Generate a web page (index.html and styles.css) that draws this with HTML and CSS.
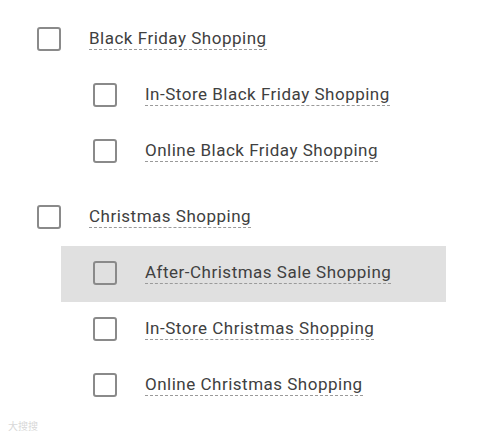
FILE: index.html
```html
<!DOCTYPE html>
<html>
<head>
<meta charset="utf-8">
<link rel="stylesheet" href="styles.css">
</head>
<body>
<div class="tree">
  <div class="group">
    <div class="row parent"><span class="box"></span><span class="label">Black Friday Shopping</span></div>
    <div class="children">
      <div class="row"><span class="box"></span><span class="label">In-Store Black Friday Shopping</span></div>
      <div class="row"><span class="box"></span><span class="label">Online Black Friday Shopping</span></div>
    </div>
  </div>
  <div class="group">
    <div class="row parent"><span class="box"></span><span class="label">Christmas Shopping</span></div>
    <div class="children">
      <div class="row active"><span class="box"></span><span class="label">After-Christmas Sale Shopping</span></div>
      <div class="row"><span class="box"></span><span class="label">In-Store Christmas Shopping</span></div>
      <div class="row"><span class="box"></span><span class="label">Online Christmas Shopping</span></div>
    </div>
  </div>
</div>
<div class="watermark">大搜搜</div>
</body>
</html>
```
FILE: styles.css
```css
html, body {
  margin: 0;
  padding: 0;
  background: #ffffff;
}
body {
  font-family: Roboto, "Noto Sans", sans-serif;
  color: #404040;
  width: 477px;
  height: 436px;
  position: relative;
  overflow: hidden;
}
.tree {
  padding-top: 12px;
  padding-left: 5px;
  width: 441px;
  display: flex;
  flex-direction: column;
  gap: 10px;
}
.group {
  display: flex;
  flex-direction: column;
}
.children {
  padding-left: 56px;
  display: flex;
  flex-direction: column;
}
.row {
  height: 56px;
  display: flex;
  align-items: center;
  padding-left: 32px;
  padding-bottom: 3px;
  box-sizing: border-box;
}
.row.active {
  background: #e0e0e0;
}
.box {
  width: 20px;
  height: 20px;
  border: 2px solid #8a8a8a;
  border-radius: 3px;
  flex: none;
}
.label {
  margin-left: 28px;
  font-size: 17px;
  letter-spacing: 0.5px;
  line-height: 20px;
  border-bottom: 1px dashed #9a9a9a;
  padding-bottom: 1px;
}
.watermark {
  position: absolute;
  left: 8px;
  top: 418px;
  font-size: 10px;
  color: #d8d8d8;
  font-family: "Noto Sans CJK SC", sans-serif;
}
```
